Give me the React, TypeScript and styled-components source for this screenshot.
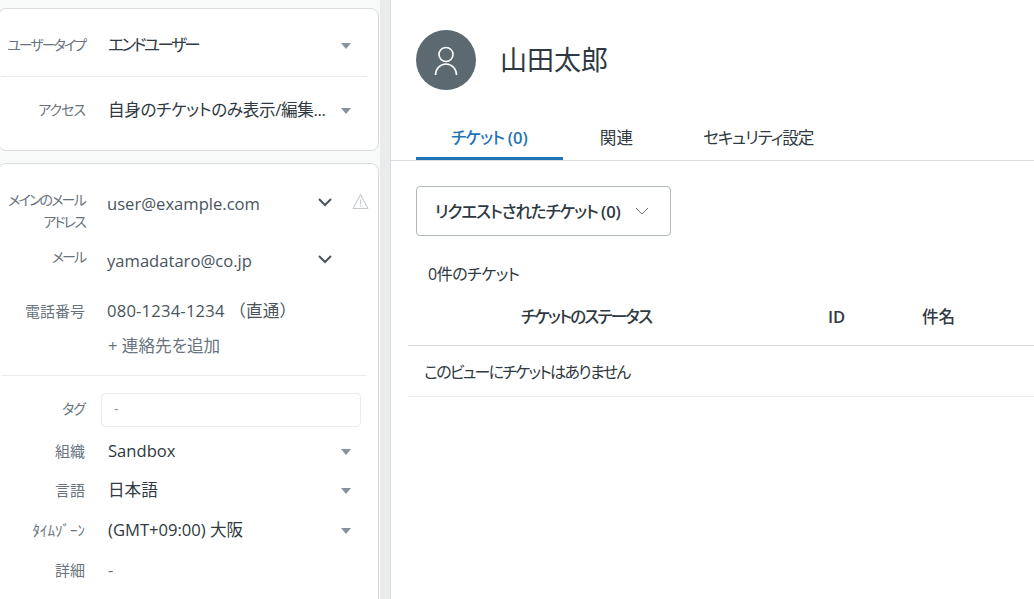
import React from 'react';
import styled, { createGlobalStyle } from 'styled-components';

const Global = createGlobalStyle`
  html, body { margin: 0; padding: 0; height: 100%; background: #fff; overflow: hidden; }
  body {
    font-family: "Open Sans", "Noto Sans CJK JP", "Noto Sans", sans-serif;
    font-feature-settings: "palt";
    color: #2f3941;
  }
`;

const Page = styled.div`
  display: flex;
  width: 1034px;
  height: 599px;
  overflow: hidden;
`;
const Sidebar = styled.aside`
  width: 380px;
  flex: none;
  background: #f8f9f9;
  padding-top: 8px;
  box-sizing: border-box;
  overflow: hidden;
`;
const Strip = styled.div`
  width: 10px;
  flex: none;
  background: #e9ebed;
  border-right: 1px solid #d8dcde;
`;
const Card = styled.section<{ $pt: number; $pb: number }>`
  margin: 0 1px 12px -2px;
  padding: ${p => p.$pt}px 0 ${p => p.$pb}px;
  background: #fff;
  border: 1px solid #d8dcde;
  border-radius: 8px;
`;
const Row = styled.div<{ $mb?: number }>`
  display: flex;
  align-items: flex-start;
  margin-bottom: ${p => p.$mb ?? 0}px;
`;
const Label = styled.div<{ $kana?: boolean; $ls?: number }>`
  width: 86px;
  flex: none;
  text-align: right;
  white-space: nowrap;
  direction: rtl;
  font-size: ${p => (p.$kana ? 14 : 15)}px;
  letter-spacing: ${p => p.$ls ?? 0}px;
  line-height: 22px;
  color: #68737d;
`;
const Value = styled.div<{ $mt?: number; $dark?: boolean; $x?: number; $ls?: number; $plain?: boolean }>`
  flex: 1;
  min-width: 0;
  margin: ${p => p.$mt ?? 0}px 0 0 ${p => p.$x ?? 22}px;
  font-size: 16.6px;
  line-height: 22px;
  white-space: nowrap;
  letter-spacing: ${p => p.$ls ?? 0}px;
  font-feature-settings: ${p => (p.$plain ? 'normal' : '"palt"')};
  color: ${p => (p.$dark ? '#2f3941' : '#49545c')};
`;
const Muted = styled.span`
  color: #68737d;
`;
const Caret = styled.span`
  flex: none;
  width: 0;
  height: 0;
  margin: 9px 27px 0 0;
  border-left: 5px solid transparent;
  border-right: 5px solid transparent;
  border-top: 6px solid #87929d;
`;
const Divider = styled.hr<{ $mb?: number }>`
  width: 366px;
  height: 1px;
  margin: 0 0 ${p => p.$mb ?? 0}px 2px;
  border: 0;
  background: #e9ebed;
`;
const TagBox = styled.div`
  width: 246px;
  height: 32px;
  margin: -5px 0 0 16px;
  padding-left: 12px;
  border: 1px solid #e9ebed;
  border-radius: 4px;
  font-size: 14px;
  line-height: 30px;
  color: #87929d;
`;
const ChevronSlot = styled.svg`
  flex: none;
  width: 16px;
  height: 16px;
  margin: 5px 0 0 0;
`;
const WarnSlot = styled.div`
  flex: none;
  width: 17px;
  height: 17px;
  margin: 4px 9px 0 19px;
`;
const ChevronGap = styled.div`
  width: 45px;
  flex: none;
`;
const Main = styled.main`
  flex: 1;
  min-width: 0;
`;
const Header = styled.header`
  display: flex;
  align-items: center;
  padding: 30px 0 0 25px;
  gap: 24px;
`;
const Avatar = styled.div`
  width: 60px;
  height: 60px;
  border-radius: 50%;
  background: #5c6970;
  display: flex;
  align-items: center;
  justify-content: center;
`;
const Name = styled.h1`
  margin: 0;
  font-size: 27px;
  font-weight: 400;
  line-height: 36px;
  color: #2f3941;
`;
const Tabs = styled.nav`
  display: flex;
  height: 47px;
  margin-top: 23px;
  padding-left: 25px;
  border-bottom: 1px solid #d8dcde;
`;
const Tab = styled.div<{ $active?: boolean; $ml?: number; $ls?: number }>`
  box-sizing: border-box;
  height: 47px;
  padding: 0 35px;
  margin-left: ${p => p.$ml ?? 0}px;
  font-size: 16.6px;
  letter-spacing: ${p => p.$ls ?? 0}px;
  line-height: 50px;
  white-space: nowrap;
  color: ${p => (p.$active ? '#1f73b7' : '#2f3941')};
  font-weight: ${p => (p.$active ? 500 : 400)};
  border-bottom: 3px solid ${p => (p.$active ? '#1f73b7' : 'transparent')};
`;
const Num = styled.span`
  font-weight: 600;
  letter-spacing: 0;
`;
const Filter = styled.button`
  display: flex;
  align-items: center;
  gap: 14px;
  width: 255px;
  height: 50px;
  margin: 25px 0 0 25px;
  padding: 0 0 0 18px;
  box-sizing: border-box;
  background: #fff;
  border: 1px solid #b0b8be;
  border-radius: 4px;
  font: inherit;
  font-size: 16.6px;
  font-weight: 500;
  letter-spacing: -1.1px;
  white-space: nowrap;
  color: #2f3941;
`;
const Count = styled.div`
  margin: 27px 0 0 37px;
  font-size: 16px;
  letter-spacing: -0.5px;
  line-height: 22px;
  color: #2f3941;
`;
const Table = styled.div`
  margin: 12px 0 0 17px;
`;
const HeadRow = styled.div`
  display: grid;
  grid-template-columns: 356px 158px 1fr;
  height: 48px;
  line-height: 40px;
  font-size: 16.6px;
  font-weight: 500;
  border-bottom: 1px solid #d8dcde;
`;
const HeadCell = styled.div<{ $center?: boolean; $pl?: number; $ls?: number }>`
  text-align: ${p => (p.$center ? 'center' : 'left')};
  padding-left: ${p => p.$pl ?? 0}px;
  letter-spacing: ${p => p.$ls ?? 0}px;
`;
const EmptyRow = styled.div`
  height: 50px;
  padding-left: 16px;
  font-size: 16px;
  letter-spacing: -1.7px;
  line-height: 53px;
  border-bottom: 1px solid #e9ebed;
`;

const Chevron = () => (
  <ChevronSlot viewBox="0 0 16 16" fill="none">
    <path d="M2 5 8 11 14 5" stroke="#49545c" strokeWidth="2" />
  </ChevronSlot>
);
const Warn = () => (
  <WarnSlot>
    <svg width="17" height="17" viewBox="0 0 16 16" fill="none">
      <path d="M8 1.500 15 14.500H1Z" stroke="#c2c8cc" strokeWidth="1" strokeLinejoin="round" />
      <path d="M8 6v4.500M8 11.800v1.200" stroke="#c2c8cc" strokeWidth="1" />
    </svg>
  </WarnSlot>
);

export default function App() {
  return (
    <Page>
      <Global />
      <Sidebar>
        <Card $pt={25} $pb={29}>
          <Row $mb={20}>
            <Label $kana $ls={-2}>ユーザータイプ</Label>
            <Value $dark $x={23} $ls={-2.6}>エンドユーザー</Value>
            <Caret />
          </Row>
          <Divider $mb={22} />
          <Row>
            <Label $kana $ls={-1}>アクセス</Label>
            <Value $dark $x={23} $ls={-0.35}>自身のチケットのみ表示/編集...</Value>
            <Caret />
          </Row>
        </Card>
        <Card $pt={25} $pb={40}>
          <Row $mb={13}>
            <Label $kana $ls={-1.8}>メインのメール<br />アドレス</Label>
            <Value $mt={4}>user@example.com</Value>
            <Chevron />
            <Warn />
          </Row>
          <Row $mb={28}>
            <Label $kana $ls={-2}>メール</Label>
            <Value $mt={4}>yamadataro@co.jp</Value>
            <Chevron />
            <ChevronGap />
          </Row>
          <Row $mb={13}>
            <Label>電話番号</Label>
            <Value $plain $ls={0.2}>080-1234-1234 （直通）</Value>
          </Row>
          <Row $mb={18}>
            <Label />
            <Value $x={23}><Muted>+ 連絡先を追加</Muted></Value>
          </Row>
          <Divider $mb={22} />
          <Row $mb={13}>
            <Label $kana $ls={-1}>タグ</Label>
            <TagBox>-</TagBox>
          </Row>
          <Row $mb={17}>
            <Label>組織</Label>
            <Value $dark $x={23}>Sandbox</Value>
            <Caret />
          </Row>
          <Row $mb={18}>
            <Label>言語</Label>
            <Value $dark $x={23}>日本語</Value>
            <Caret />
          </Row>
          <Row $mb={18}>
            <Label>ﾀｲﾑｿﾞｰﾝ</Label>
            <Value $dark $x={23}>(GMT+09:00) 大阪</Value>
            <Caret />
          </Row>
          <Row>
            <Label>詳細</Label>
            <Value $x={23}><Muted>-</Muted></Value>
          </Row>
        </Card>
      </Sidebar>
      <Strip />
      <Main>
        <Header>
          <Avatar>
            <svg width="26" height="32" viewBox="0 0 26 32" fill="none" stroke="#fff" strokeWidth="1.6">
              <circle cx="13" cy="10.500" r="7" />
              <path d="M2.500 31c0-6 4.500-11 10.500-11s10.500 5 10.500 11" />
            </svg>
          </Avatar>
          <Name>山田太郎</Name>
        </Header>
        <Tabs>
          <Tab $active $ls={-0.8}>チケット <Num>(0)</Num></Tab>
          <Tab $ml={2}>関連</Tab>
          <Tab $ls={-1.1}>セキュリティ設定</Tab>
        </Tabs>
        <Filter>
          <span>リクエストされたチケット <Num>(0)</Num></span>
          <svg width="14" height="8" viewBox="0 0 14 8" fill="none">
            <path d="M1 1 7 7 13 1" stroke="#68737d" strokeWidth="1" />
          </svg>
        </Filter>
        <Count>0件のチケット</Count>
        <Table>
          <HeadRow>
            <HeadCell $center $ls={-1.8}>チケットのステータス</HeadCell>
            <HeadCell $pl={64}><Num>ID</Num></HeadCell>
            <HeadCell>件名</HeadCell>
          </HeadRow>
          <EmptyRow>このビューにチケットはありません</EmptyRow>
        </Table>
      </Main>
    </Page>
  );
}
